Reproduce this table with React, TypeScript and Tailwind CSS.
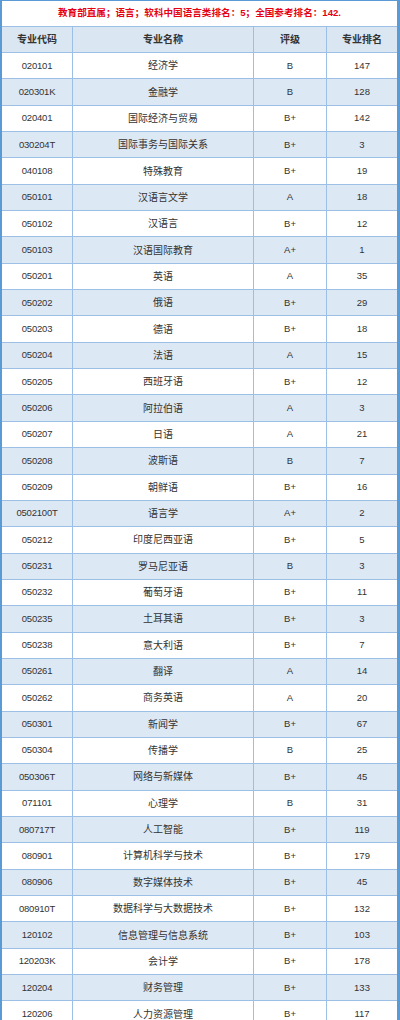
import React from 'react';

type Row = [string, string, string, string];

const rows: Row[] = [
  ['020101', '经济学', 'B', '147'],
  ['020301K', '金融学', 'B', '128'],
  ['020401', '国际经济与贸易', 'B+', '142'],
  ['030204T', '国际事务与国际关系', 'B+', '3'],
  ['040108', '特殊教育', 'B+', '19'],
  ['050101', '汉语言文学', 'A', '18'],
  ['050102', '汉语言', 'B+', '12'],
  ['050103', '汉语国际教育', 'A+', '1'],
  ['050201', '英语', 'A', '35'],
  ['050202', '俄语', 'B+', '29'],
  ['050203', '德语', 'B+', '18'],
  ['050204', '法语', 'A', '15'],
  ['050205', '西班牙语', 'B+', '12'],
  ['050206', '阿拉伯语', 'A', '3'],
  ['050207', '日语', 'A', '21'],
  ['050208', '波斯语', 'B', '7'],
  ['050209', '朝鲜语', 'B+', '16'],
  ['0502100T', '语言学', 'A+', '2'],
  ['050212', '印度尼西亚语', 'B+', '5'],
  ['050231', '罗马尼亚语', 'B', '3'],
  ['050232', '葡萄牙语', 'B+', '11'],
  ['050235', '土耳其语', 'B+', '3'],
  ['050238', '意大利语', 'B+', '7'],
  ['050261', '翻译', 'A', '14'],
  ['050262', '商务英语', 'A', '20'],
  ['050301', '新闻学', 'B+', '67'],
  ['050304', '传播学', 'B', '25'],
  ['050306T', '网络与新媒体', 'B+', '45'],
  ['071101', '心理学', 'B', '31'],
  ['080717T', '人工智能', 'B+', '119'],
  ['080901', '计算机科学与技术', 'B+', '179'],
  ['080906', '数字媒体技术', 'B+', '45'],
  ['080910T', '数据科学与大数据技术', 'B+', '132'],
  ['120102', '信息管理与信息系统', 'B+', '103'],
  ['120203K', '会计学', 'B+', '178'],
  ['120204', '财务管理', 'B+', '133'],
  ['120206', '人力资源管理', 'B+', '117'],
];

const grid = 'grid grid-cols-[71px_181px_73px_1fr]';
const cell = 'flex items-center justify-center border-r border-[#9cbfe6] last:border-r-0';

export default function App() {
  return (
    <div
      className="w-[400px] h-[1020px] overflow-hidden bg-white border-l-2 border-r-[3px] border-t border-[#5b9bd5] text-[#333]"
      style={{ fontFamily: '"Liberation Sans", "Noto Sans CJK SC", sans-serif' }}
    >
      {/* Title */}
      <div className="h-[26px] flex items-center justify-center border-b border-[#9cbfe6] text-[9.6px] font-bold text-[#e60012]">
        教育部直属；语言；软科中国语言类排名：5；全国参考排名：142.
      </div>

      {/* Header */}
      <div className={`${grid} h-[26px] bg-[#dbe6f3] border-b-[1.5px] border-[#9cbfe6] text-[10px] font-bold`}>
        <div className={cell}>专业代码</div>
        <div className={cell}>专业名称</div>
        <div className={cell}>评级</div>
        <div className={cell}>专业排名</div>
      </div>

      {/* Body */}
      {rows.map(([code, name, grade, rank], i) => (
        <div
          key={code}
          className={`${grid} h-[26.35px] border-b border-[#9cbfe6] text-[10px] ${i % 2 === 1 ? 'bg-[#dde8f5]' : 'bg-white'}`}
        >
          <div className={`${cell} text-[9.5px] tracking-[-0.2px]`}>{code}</div>
          <div className={cell}>{name}</div>
          <div className={`${cell} text-[9.5px]`}>{grade}</div>
          <div className={`${cell} text-[9.5px]`}>{rank}</div>
        </div>
      ))}
    </div>
  );
}
